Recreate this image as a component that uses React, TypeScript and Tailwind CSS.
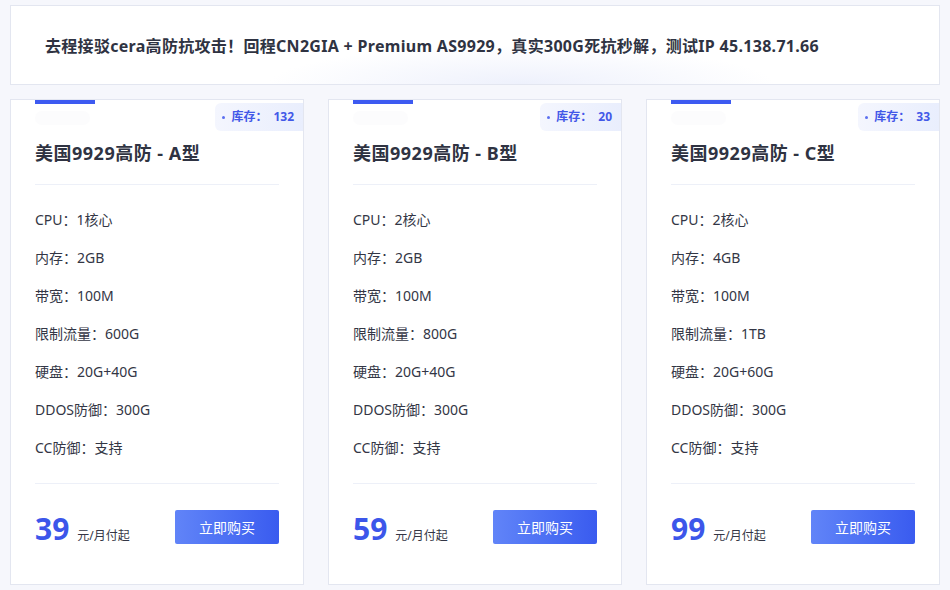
const plans = [
  {
    name: '美国9929高防 - A型',
    stock: 132,
    price: 39,
    specs: ['CPU：1核心', '内存：2GB', '带宽：100M', '限制流量：600G', '硬盘：20G+40G', 'DDOS防御：300G', 'CC防御：支持'],
  },
  {
    name: '美国9929高防 - B型',
    stock: 20,
    price: 59,
    specs: ['CPU：2核心', '内存：2GB', '带宽：100M', '限制流量：800G', '硬盘：20G+40G', 'DDOS防御：300G', 'CC防御：支持'],
  },
  {
    name: '美国9929高防 - C型',
    stock: 33,
    price: 99,
    specs: ['CPU：2核心', '内存：4GB', '带宽：100M', '限制流量：1TB', '硬盘：20G+60G', 'DDOS防御：300G', 'CC防御：支持'],
  },
];

function PlanCard({ plan }: { plan: (typeof plans)[number] }) {
  return (
    <div className="relative w-[294px] h-[486px] bg-white border border-[#e3e6f0] px-6 flex flex-col">
      {/* top accent */}
      <div className="h-1 w-[60px] bg-[#3d5af1]"></div>
      <div className="mt-[7px] h-[14px] w-[55px] rounded-full bg-[#fcfcfd]"></div>

      {/* stock badge */}
      <div className="absolute right-0 top-[3px] h-[28px] flex items-center pl-[7px] pr-[9px] rounded-l-md bg-gradient-to-r from-[#f4f6fe] to-[#e9eefd] text-[12px] font-bold text-[#4258e8]">
        <span className="w-[3px] h-[3px] rounded-full bg-[#5b6ff0] mr-[6px]"></span>
        <span>库存：</span>
        <span className="ml-[6px]">{plan.stock}</span>
      </div>

      {/* Title */}
      <h3 className="mt-[15px] text-[18px] leading-[26px] font-bold tracking-[0.5px] text-[#2f3342] pb-[18px] border-b border-[#edf0f8]">
        {plan.name}
      </h3>

      {/* Specs */}
      <ul className="mt-[16px] pb-[16px] border-b border-[#edf0f8]">
        {plan.specs.map((s) => (
          <li key={s} className="h-[38px] leading-[38px] text-[14px] text-[#333645]">
            {s}
          </li>
        ))}
      </ul>

      {/* Price + button */}
      <div className="mt-[26px] flex items-end justify-between">
        <div className="flex items-baseline mb-[-1px]">
          <span className="text-[30px] leading-[30px] font-bold text-[#3c56ea]">{plan.price}</span>
          <span className="ml-[8px] text-[12px] text-[#333645]">元/月付起</span>
        </div>
        <button className="w-[104px] h-[34px] rounded-[2px] bg-gradient-to-r from-[#6184f8] to-[#3a5bef] text-white text-[14px]">
          立即购买
        </button>
      </div>
    </div>
  );
}

export default function App() {
  return (
    <div
      className="w-[950px] h-[590px] overflow-hidden bg-[#f6f7fc] pt-[5px] px-[10px]"
      style={{ fontFamily: '"Noto Sans", "Noto Sans CJK SC", sans-serif' }}
    >
      {/* Notice */}
      <div className="h-[80px] bg-white border border-[#e3e6f0] flex items-center pl-[34px] bg-[radial-gradient(ellipse_at_55%_100%,#eef1fc_0%,#ffffff_35%)]">
        <p className="mt-[1px] text-[16px] font-bold tracking-[0.3px] text-[#2f3342]">
          去程接驳cera高防抗攻击！回程CN2GIA + Premium AS9929，真实300G死抗秒解，测试IP 45.138.71.66
        </p>
      </div>

      {/* Plans */}
      <div className="mt-[14px] flex gap-6">
        {plans.map((p) => (
          <PlanCard key={p.name} plan={p} />
        ))}
      </div>
    </div>
  );
}
